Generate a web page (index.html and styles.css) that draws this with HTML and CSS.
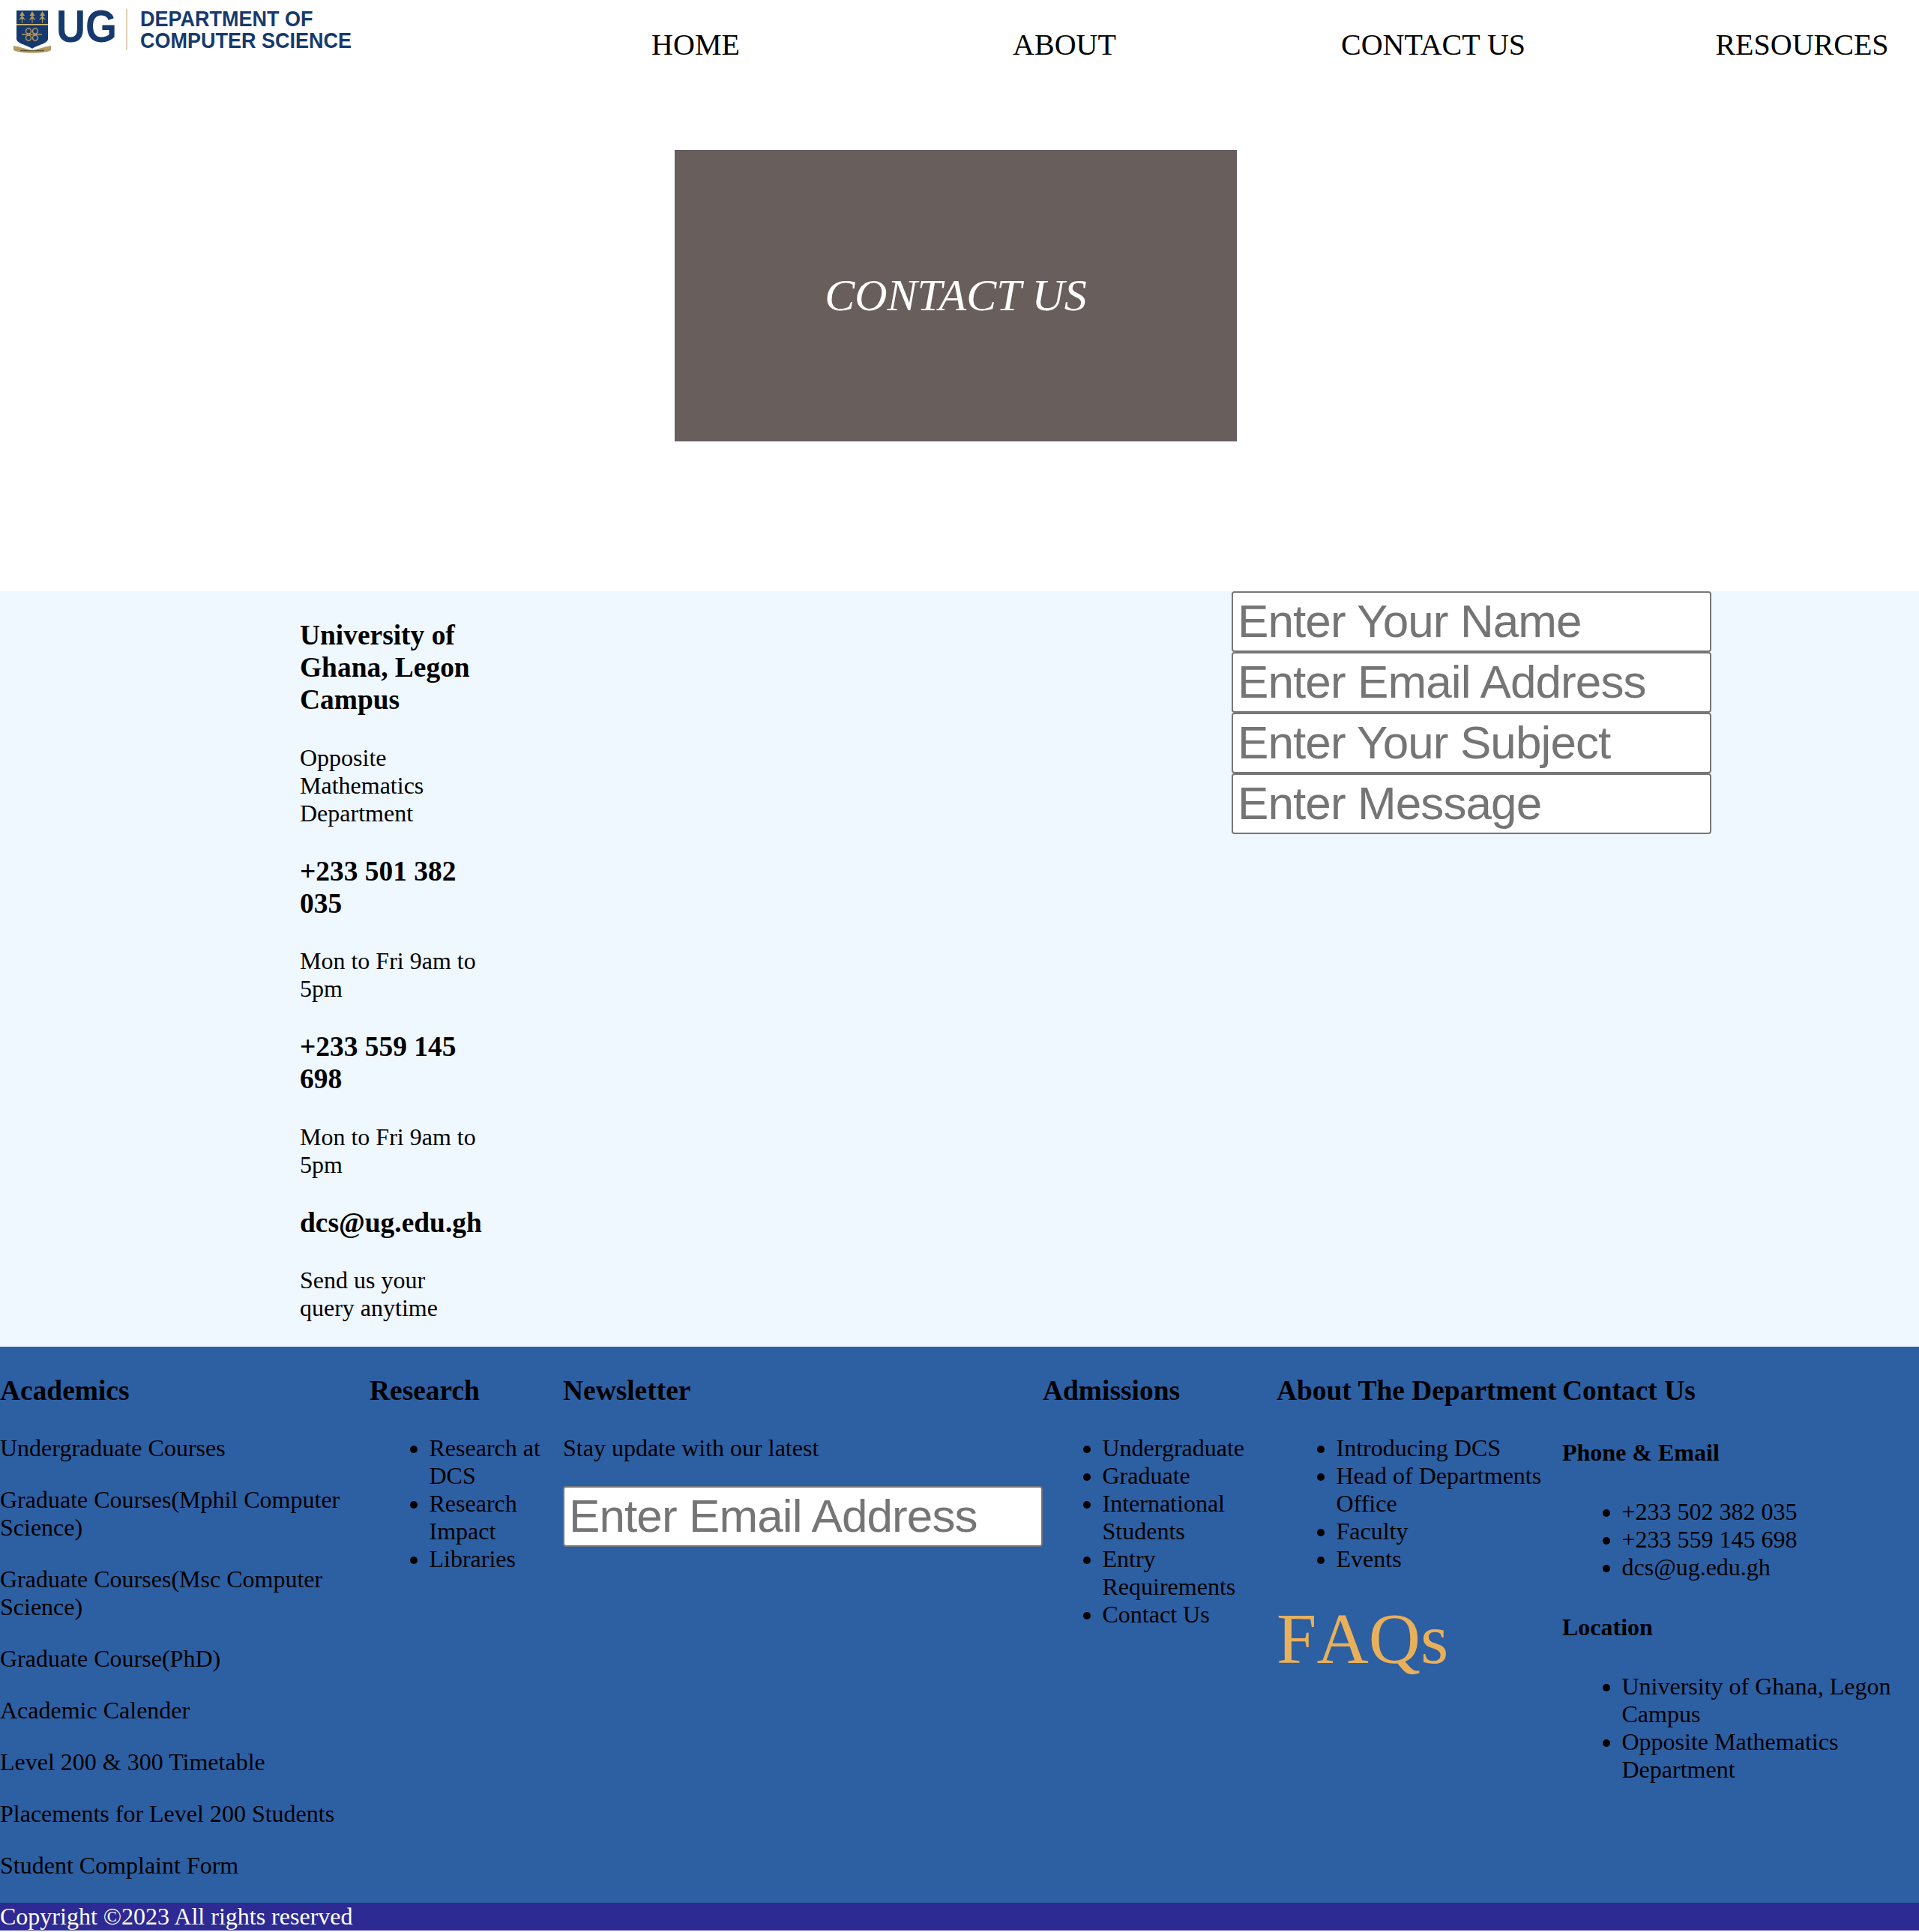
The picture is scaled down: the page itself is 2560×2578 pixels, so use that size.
FILE: index.html
```html
<!DOCTYPE html>
<html lang="en">
  <head>
    <meta charset="UTF-8" />
    <meta name="viewport" content="width=device-width, initial-scale=1.0" />
    <title>Contact Us - Department of Computer Science</title>
    <link rel="stylesheet" href="styles.css">
  </head>
  <body>
    <header class="header">
      <a class="logo" href="#">
        <svg class="crest" width="52" height="60" viewBox="0 0 52 60">
          <path d="M4 2H46V40C46 46 32 48 25 53C18 48 4 46 4 40Z" fill="#163a6d"/>
          <rect x="4" y="20" width="42" height="1.5" fill="#d9bd7c"/>
          <path d="M11 19V13L7 15L11 9L8 9L11.500 3L15 9L12 9L16 15L12 13V19Z" fill="#b9975b"/>
          <path d="M24.500 19V13L20.500 15L24.500 9L21.500 9L25 3L28.500 9L25.500 9L29.500 15L25.500 13V19Z" fill="#b9975b"/>
          <path d="M38 19V13L34 15L38 9L35 9L38.500 3L42 9L39 9L43 15L39 13V19Z" fill="#b9975b"/>
          <path d="M11 34H38" stroke="#b9975b" stroke-width="1.500"/>
          <circle cx="20" cy="29.500" r="3.500" fill="none" stroke="#b9975b" stroke-width="1.500"/>
          <circle cx="29" cy="29.500" r="3.500" fill="none" stroke="#b9975b" stroke-width="1.500"/>
          <circle cx="20" cy="38.500" r="3.500" fill="none" stroke="#b9975b" stroke-width="1.500"/>
          <circle cx="29" cy="38.500" r="3.500" fill="none" stroke="#b9975b" stroke-width="1.500"/>
          <path d="M0 49C6 50 14 52 25 56C36 52 44 50 50 49L50 55C42 60 10 60 0 55Z" fill="#b39a63"/>
          <path d="M9 55.500H41" stroke="#5f5436" stroke-width="1.500"/>
        </svg>
        <span class="logo-ug">UG</span>
        <span class="logo-line"></span>
        <span class="logo-name">DEPARTMENT OF<br>COMPUTER SCIENCE</span>
      </a>
      <nav class="nav">
        <a href="#">HOME</a>
        <a href="#">ABOUT</a>
        <a href="#">CONTACT US</a>
        <a href="#">RESOURCES</a>
      </nav>
    </header>

    <section class="hero">
      <h1>CONTACT US</h1>
    </section>

    <section class="contact">
      <div class="contact-info">
        <h3>University of Ghana, Legon Campus</h3>
        <p>Opposite Mathematics Department</p>
        <h3>+233 501 382 035</h3>
        <p>Mon to Fri 9am to 5pm</p>
        <h3>+233 559 145 698</h3>
        <p>Mon to Fri 9am to 5pm</p>
        <h3>dcs@ug.edu.gh</h3>
        <p>Send us your query anytime</p>
      </div>
      <form class="contact-form">
        <input type="text" placeholder="Enter Your Name" />
        <input type="email" placeholder="Enter Email Address" />
        <input type="text" placeholder="Enter Your Subject" />
        <input type="text" placeholder="Enter Message" />
      </form>
    </section>

    <footer class="footer">
      <div class="col col-academics">
        <h3>Academics</h3>
        <p>Undergraduate Courses</p>
        <p>Graduate Courses(Mphil Computer Science)</p>
        <p>Graduate Courses(Msc Computer Science)</p>
        <p>Graduate Course(PhD)</p>
        <p>Academic Calender</p>
        <p>Level 200 &amp; 300 Timetable</p>
        <p>Placements for Level 200 Students</p>
        <p>Student Complaint Form</p>
      </div>
      <div class="col col-research">
        <h3>Research</h3>
        <ul>
          <li>Research at DCS</li>
          <li>Research Impact</li>
          <li>Libraries</li>
        </ul>
      </div>
      <div class="col col-news">
        <h3>Newsletter</h3>
        <p>Stay update with our latest</p>
        <input type="email" placeholder="Enter Email Address" />
      </div>
      <div class="col col-admissions">
        <h3>Admissions</h3>
        <ul>
          <li>Undergraduate</li>
          <li>Graduate</li>
          <li>International Students</li>
          <li>Entry Requirements</li>
          <li>Contact Us</li>
        </ul>
      </div>
      <div class="col col-about">
        <h3>About The Department</h3>
        <ul>
          <li>Introducing DCS</li>
          <li>Head of Departments Office</li>
          <li>Faculty</li>
          <li>Events</li>
        </ul>
        <p><a class="faqs" href="#">FAQs</a></p>
      </div>
      <div class="col col-contact">
        <h3>Contact Us</h3>
        <h4>Phone &amp; Email</h4>
        <ul>
          <li>+233 502 382 035</li>
          <li>+233 559 145 698</li>
          <li>dcs@ug.edu.gh</li>
        </ul>
        <h4>Location</h4>
        <ul>
          <li>University of Ghana, Legon Campus</li>
          <li>Opposite Mathematics Department</li>
        </ul>
      </div>
    </footer>

    <div class="copyright">Copyright ©2023 All rights reserved</div>
  </body>
</html>
```

FILE: styles.css
```css
body {
  margin: 0;
  font-family: "Liberation Serif", "Times New Roman", serif;
  font-size: 32px;
  color: #000;
  background-color: #fff;
}

a {
  color: inherit;
  text-decoration: none;
}

/* Header */
.header {
  display: flex;
  justify-content: space-between;
  height: 118px;
}

.logo {
  display: flex;
  align-items: flex-start;
  padding: 12px 0 0 18px;
  font-family: "Liberation Sans", Arial, sans-serif;
  font-weight: bold;
  color: #163a6d;
}

.crest {
  flex: none;
}

.logo-ug {
  margin: -8px 0 0 5px;
  font-size: 54px;
  line-height: 66px;
  transform: scaleY(1.13);
  transform-origin: 50% 52px;
}

.logo-line {
  width: 2px;
  height: 55px;
  margin: 0 17px 0 12px;
  background-color: #e3d3b5;
}

.logo-name {
  margin-top: -1px;
  font-size: 27px;
  line-height: 27px;
  white-space: nowrap;
  transform: scaleY(1.08);
  transform-origin: 0 0;
}

.nav {
  display: flex;
  align-items: center;
  gap: 180px;
  font-size: 40px;
}

.nav a {
  width: 312px;
  text-align: center;
}

/* Hero */
.hero {
  display: flex;
  align-items: center;
  justify-content: center;
  width: 750px;
  height: 389px;
  margin: 82px 0 200px 900px;
  background-color: #685e5c;
}

.hero h1 {
  margin: 0;
  font-size: 60px;
  font-style: italic;
  font-weight: normal;
  color: #fff;
}

/* Contact */
.contact {
  display: flex;
  justify-content: space-between;
  align-items: flex-start;
  height: 1008px;
  padding: 0 277px 0 400px;
  background-color: #eff7ff;
}

.contact-info {
  width: 245px;
}

.contact-info h3 {
  margin: 37.3px 0;
}

.contact-form {
  width: 640px;
}

input {
  display: block;
  box-sizing: border-box;
  width: 640px;
  height: 81px;
  padding: 0 6px 2px;
  font-family: "Liberation Sans", Arial, sans-serif;
  font-size: 62px;
  letter-spacing: -0.9px;
  background-color: #fff;
  border: 2px solid #767676;
  border-radius: 4px;
}

input::placeholder {
  color: #757575;
}

/* Footer */
.footer {
  display: flex;
  height: 742px;
  background-color: #2d5fa3;
}

.footer h3 {
  margin: 37px 0;
}

.footer ul {
  padding-left: 79.5px;
}

.col {
  flex: none;
}

.col-academics {
  width: 493px;
}

.col-research {
  width: 258px;
}

.col-news {
  width: 640px;
}

.col-admissions {
  width: 312px;
}

.col-about {
  width: 381px;
}

.col-contact {
  width: 476px;
}

.faqs {
  font-size: 96px;
  font-kerning: none;
  color: #e8b05a;
}

.copyright {
  background-color: #2e2a93;
  color: #fff;
}
```
